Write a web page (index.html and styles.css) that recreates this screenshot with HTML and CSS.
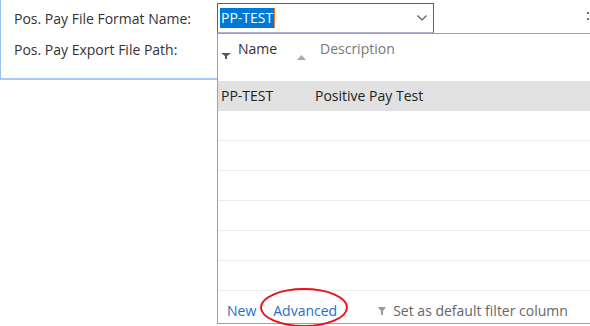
FILE: index.html
```html
<!DOCTYPE html>
<html lang="en">
<head>
    <meta charset="UTF-8">
    <title>Positive Pay Setup</title>
    <link rel="stylesheet" href="styles.css">
</head>
<body>
    <div class="panel">
        <div class="field">Pos. Pay File Format Name:</div>
        <div class="field">Pos. Pay Export File Path:</div>
    </div>
    <div class="colon">:</div>

    <div class="lookup">
        <div class="combo">
            <span class="selected">PP-TEST</span><span class="caret"></span>
            <svg class="chevron" width="10" height="6" viewBox="0 0 10 6"><path d="M0.5 0.5 L5 5 L9.5 0.5" fill="none" stroke="#555" stroke-width="1.1"/></svg>
        </div>
        <div class="dropdown">
            <div class="head">
                <div class="col col-name">
                    <svg class="filter" width="10" height="6" viewBox="0 0 10 6"><path d="M0 0 H10 L6 3 V6 H4 V3 Z" fill="#555"/></svg>
                    <span>Name</span>
                    <svg class="sort" width="9" height="5" viewBox="0 0 9 5"><path d="M0 5 L4.5 0 L9 5 Z" fill="#aaa"/></svg>
                </div>
                <div class="col col-desc">Description</div>
            </div>
            <div class="rows">
                <div class="row active"><span class="cell-name">PP-TEST</span><span>Positive Pay Test</span></div>
                <div class="row"></div>
                <div class="row"></div>
                <div class="row"></div>
                <div class="row"></div>
                <div class="row"></div>
                <div class="row"></div>
            </div>
            <div class="foot">
                <a class="link">New</a>
                <a class="link circled">Advanced</a>
                <span class="default-filter">
                    <svg width="8" height="8" viewBox="0 0 8 8"><path d="M0 0 H8 L5 4 V8 H3 V4 Z" fill="#999"/></svg>
                    Set as default filter column
                </span>
            </div>
        </div>
    </div>
</body>
</html>
```

FILE: styles.css
```css
body {
    margin: 0;
    width: 590px;
    height: 326px;
    overflow: hidden;
    position: relative;
    background: #fff;
    font-family: "Open Sans", "Noto Sans", sans-serif;
    font-size: 14px;
    color: #333;
}
.panel {
    width: 217px;
    height: 80px;
    box-sizing: border-box;
    border-left: 1px solid #99c0f5;
    border-bottom: 2px solid #a9cbf7;
    padding-top: 3px;
}
.field {
    padding-left: 13px;
    height: 31px;
    line-height: 31px;
}
.colon {
    position: absolute;
    top: 5px;
    left: 586px;
    color: #222;
}
.lookup {
    position: absolute;
    left: 217px;
    top: 3px;
    width: 380px;
}
.combo {
    width: 217px;
    height: 30px;
    box-sizing: border-box;
    border: 1px solid #5e56a0;
    border-bottom-color: #b3aed6;
    display: flex;
    align-items: center;
    padding-left: 2px;
    position: relative;
}
.selected {
    background: #0078d7;
    color: #fff;
    line-height: 20px;
    padding: 0 1px;
}
.caret {
    width: 1px;
    height: 20px;
    background: #f08020;
}
.chevron {
    position: absolute;
    right: 6px;
    top: 11px;
}
.dropdown {
    height: 291px;
    box-sizing: border-box;
    border-left: 1px solid #a0a0a0;
    border-top: 1px solid #a0a0a0;
    border-bottom: 1px solid #a0a0a0;
    background: #fff;
}
.head {
    height: 47px;
    display: flex;
}
.col {
    padding-top: 5px;
}
.col-name {
    width: 94px;
    display: flex;
    align-items: flex-start;
    padding-left: 3px;
}
.col-name .filter {
    margin-top: 14px;
    margin-right: 7px;
}
.col-name .sort {
    margin-top: 16px;
    margin-left: 20px;
}
.col-desc {
    color: #777;
    padding-left: 5px;
}
.row {
    height: 30px;
    box-sizing: border-box;
    border-bottom: 1px solid #ececec;
    display: flex;
    align-items: center;
    color: #222;
}
.row.active {
    background: #e1e1e1;
    border-bottom-color: #e1e1e1;
}
.cell-name {
    width: 94px;
    padding-left: 3px;
}
.foot {
    height: 32px;
    box-sizing: border-box;
    display: flex;
    align-items: center;
    padding-left: 9px;
    padding-top: 7px;
}
.link {
    color: #1e6fcf;
    margin-right: 17px;
}
.circled {
    position: relative;
    margin-right: 41px;
}
.circled::after {
    content: "";
    position: absolute;
    left: -13px;
    right: -11px;
    top: -13px;
    bottom: -7px;
    border: 2px solid #e8141c;
    border-radius: 50%;
}
.default-filter {
    color: #666;
    display: flex;
    align-items: center;
    gap: 7px;
}
```
